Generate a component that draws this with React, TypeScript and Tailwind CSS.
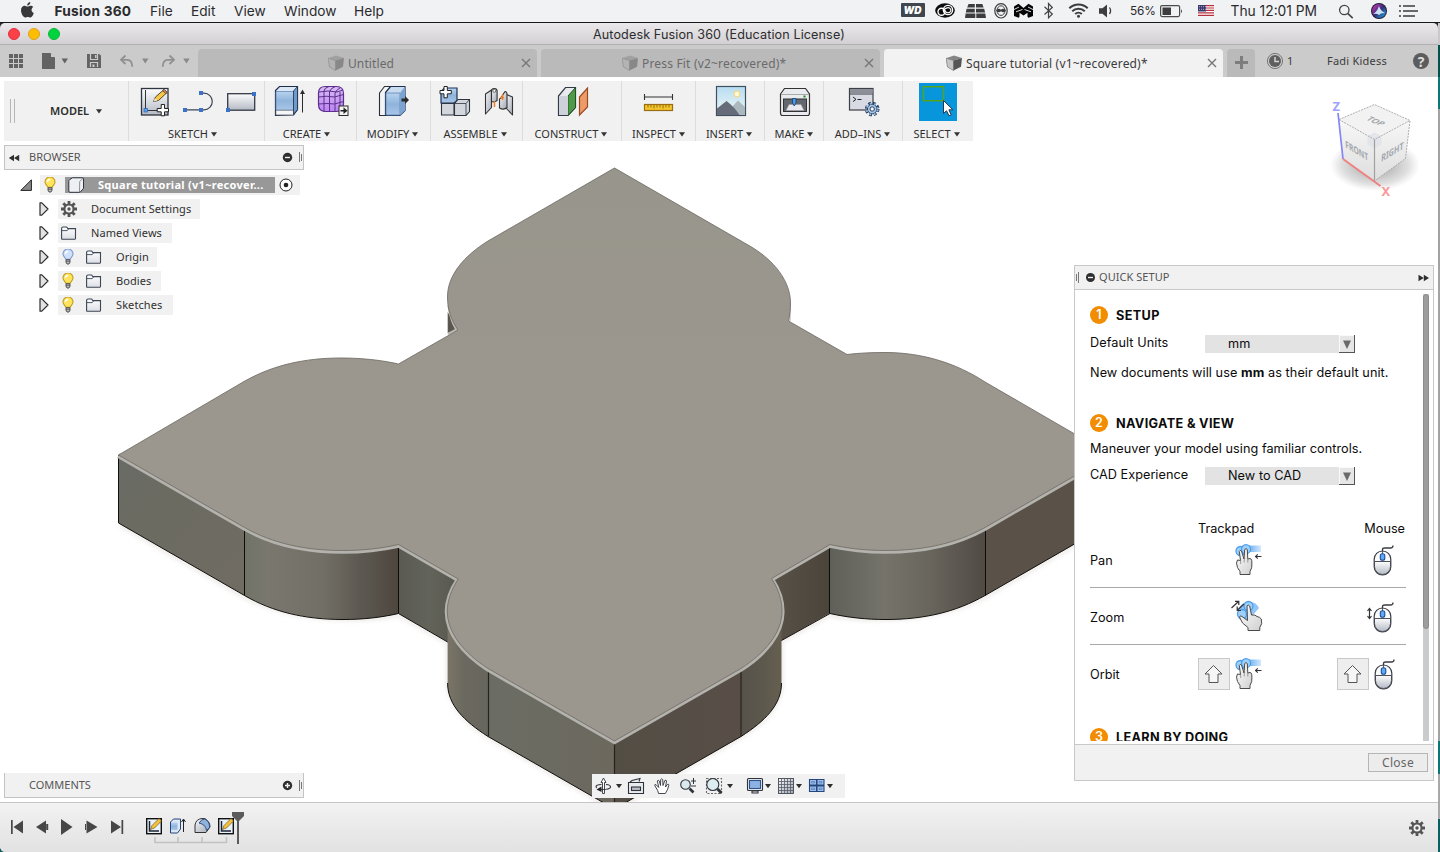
import React from "react";

type ArtProps = { x: number; y: number; w: number; h: number; children: React.ReactNode };

/* An inline drawing whose view box uses window coordinates. */
function Art({ x, y, w, h, children }: ArtProps) {
  return (
    <svg className="block shrink-0" width={w} height={h} viewBox={`${x} ${y} ${w} ${h}`} fill="none">
      {children}
    </svg>
  );
}

function Caret() {
  return (
    <svg className="ml-[3px] block shrink-0" width="6" height="5" viewBox="0 0 6 5">
      <path d="M0 .3h6L3 4.6z" fill="#333" />
    </svg>
  );
}

function Defs() {
  return (
    <svg className="absolute h-0 w-0" aria-hidden="true">
      <defs>
        <linearGradient id="paper" x1="0" y1="0" x2="0" y2="1">
          <stop offset="0" stopColor="#fdfdfe" />
          <stop offset="1" stopColor="#b4b9c4" />
        </linearGradient>
        <linearGradient id="folder" x1="0" y1="0" x2="0" y2="1">
          <stop offset="0" stopColor="#ffffff" />
          <stop offset="1" stopColor="#dcdfe5" />
        </linearGradient>
        <linearGradient id="blue" x1="0" y1="0" x2="0" y2="1">
          <stop offset="0" stopColor="#b8d3ee" />
          <stop offset=".5" stopColor="#8fb4dc" />
          <stop offset="1" stopColor="#a9c5e6" />
        </linearGradient>
        <linearGradient id="steel" x1="0" y1="0" x2="1" y2="1">
          <stop offset="0" stopColor="#f7f8fa" />
          <stop offset="1" stopColor="#a2a8b4" />
        </linearGradient>
        <linearGradient id="purple" x1="0" y1="0" x2="0" y2="1">
          <stop offset="0" stopColor="#d9bdf2" />
          <stop offset="1" stopColor="#bb84f3" />
        </linearGradient>
        <linearGradient id="sky" x1="0" y1="0" x2="0" y2="1">
          <stop offset="0" stopColor="#b6dcf1" />
          <stop offset="1" stopColor="#f3f8f5" />
        </linearGradient>
        <linearGradient id="hand" x1="0" y1="0" x2="1" y2="1">
          <stop offset="0" stopColor="#ffffff" />
          <stop offset="1" stopColor="#cfcfcf" />
        </linearGradient>
        <linearGradient id="swipe" x1="0" y1="0" x2="1" y2="0">
          <stop offset="0" stopColor="#3f97ec" />
          <stop offset="1" stopColor="#d3e8fc" />
        </linearGradient>
        <linearGradient id="siri" x1="0" y1="0" x2="1" y2="1">
          <stop offset="0" stopColor="#e13ab8" />
          <stop offset=".5" stopColor="#3a2d78" />
          <stop offset="1" stopColor="#19b5e8" />
        </linearGradient>
      </defs>
    </svg>
  );
}

const menus: [string, string][] = [
  ["File", "w-[41px]"],
  ["Edit", "w-[43px]"],
  ["View", "w-[50px]"],
  ["Window", "w-[70px]"],
  ["Help", "w-[60px]"],
];

function MenuBar() {
  return (
    <div className="flex h-[23px] shrink-0 items-center border-b border-[#16181c] bg-[#f1f2f4] font-['Inter',sans-serif] text-[13.7px] text-[#2b2b2d]">
      <Art x={0} y={0} w={54.5} h={22}>
        <path d="M30.300 2.100c.2 1.800-1.300 3.500-3.100 3.500-.2-1.700 1.400-3.400 3.100-3.500zM27.600 6.500c.7 0 1.500-.8 3-.8 1 0 2 .5 2.700 1.400-2.500 1.400-2.200 5 .5 6-.6 1.800-1.900 4.500-3.400 4.500-1 0-1.400-.6-2.600-.6s-1.600.6-2.600.6c-1.800 0-4.200-4-4.200-7.300 0-3 1.800-4.600 3.700-4.600 1.300 0 2.100.8 2.900.8z" fill="#38383a" />
      </Art>
      <span className="w-[95.5px] shrink-0 font-bold tracking-[0.22px] whitespace-nowrap">Fusion 360</span>
      {menus.map(([m, w]) => (
        <span key={m} className={`${w} shrink-0`}>{m}</span>
      ))}
      <div className="flex-1" />
      <Art x={896} y={0} w={234} h={22}>
        <rect x="901" y="3" width="24" height="14" rx="1" fill="#3f464d" />
        <text x="903.500" y="13.600" fontSize="10.500" fontWeight="900" fontStyle="italic" fill="#fff" fontFamily="Inter" textLength="18" lengthAdjust="spacingAndGlyphs">WD</text>
        <ellipse cx="945" cy="10.500" rx="9.800" ry="7.200" fill="#0c0c0c" />
        <circle cx="941.500" cy="11.800" r="3.500" stroke="#fff" strokeWidth="1.400" />
        <circle cx="948" cy="10" r="4.600" stroke="#fff" strokeWidth="1.400" />
        <path d="M943 10.500q4-4 6.500-2.500 2.500 2 .5 4-2 1.500-4 0l-3-2.500" stroke="#fff" strokeWidth="1.100" />
        <path d="M968.500 4h6.300v3.600h-7.600zM976 4h6.300l1.300 3.600H976zM966.600 8.800h8.200v3.600h-9zM976 8.800h8.200l.9 3.600H976zM965.600 13.600h9.700V18h-10.300zM976.300 13.600h9l.7 4.400h-9.700z" fill="#3d3d3f" />
        <ellipse cx="1001" cy="10.800" rx="6.200" ry="7.200" stroke="#3d3d3f" strokeWidth="1.200" />
        <ellipse cx="1001" cy="10.600" rx="4" ry="4.800" stroke="#3d3d3f" strokeWidth="1" />
        <path d="M996 10.500c2-2.500 3.500-2 5-.8 1.500-1.200 3-1.700 5 .8-2 2.500-3.500 2-5 .8-1.500 1.200-3 1.700-5-.8z" fill="#3d3d3f" />
        <path d="M1014 6.500 1018.500 3.800 1023.500 8 1028.500 3.800 1033 6.500V16l-4.500 1.800-1-1v-4l-4 2.700-4-2.700v4l-1 1L1014 16z" fill="#050505" />
        <path d="m1014 9.500 5-2.500M1033 9.500l-5-2.500M1016 11.800l6.500-2.300M1031 11.800l-6.500-2.300" stroke="#f1f2f4" strokeWidth=".9" />
        <path d="M1044.500 6.800 1052.300 14 1048.500 17.800V3.500L1052.300 7.500 1044.500 14.500" stroke="#444" strokeWidth="1.200" />
        <path d="M1069.300 8.300a13 13 0 0 1 18.400 0M1072.200 11.300a9 9 0 0 1 12.600 0M1075.200 14.100a4.800 4.800 0 0 1 6.600 0" stroke="#3d3d3f" strokeWidth="2" />
        <circle cx="1078.500" cy="16.300" r="1.500" fill="#3d3d3f" />
        <path d="M1099 8.300h3.500l4.500-3.700v12.800l-4.500-3.700h-3.500z" fill="#3d3d3f" />
        <path d="M1109.500 7.500q2.200 3.200 0 6.500" stroke="#3d3d3f" strokeWidth="1.300" />
      </Art>
      <span className="w-[30px] shrink-0 pt-[2px] text-[11.8px] tracking-[-0.1px]">56%</span>
      <Art x={1160} y={0} w={70.5} h={22}>
        <rect x="1160.600" y="5.600" width="19" height="11" rx="1.500" stroke="#4a4a4c" strokeWidth="1.200" />
        <rect x="1162.500" y="7.500" width="8.500" height="7.500" fill="#3d3d3f" />
        <path d="M1181 9.200q2 2 0 4z" fill="#4a4a4c" />
        <rect x="1198" y="5" width="16" height="11.200" fill="#fff" />
        <path d="M1198 5.600h16M1198 8h16M1198 10.400h16M1198 12.800h16M1198 15.400h16" stroke="#b5303c" strokeWidth="1.200" />
        <rect x="1198" y="5" width="8" height="6.500" fill="#3d3b6e" />
        <path d="M1199 6.700h7M1199 9.300h7" stroke="#c9c8dd" strokeWidth=".8" strokeDasharray="1 1" />
      </Art>
      <span className="w-[104.5px] shrink-0 text-[13.8px] tracking-[0px] whitespace-nowrap">Thu 12:01 PM</span>
      <Art x={1335} y={0} w={105} h={22}>
        <circle cx="1344.300" cy="10" r="4.700" stroke="#444" strokeWidth="1.300" />
        <path d="m1347.700 13.400 5 4.700" stroke="#444" strokeWidth="1.600" />
        <circle cx="1379" cy="11" r="8" fill="#1d1c38" />
        <circle cx="1379" cy="11" r="7" fill="url(#siri)" />
        <path d="M1373 14q4-2 6-8 1.500 5 6 7-4-.5-6 2-2-2-6-1z" fill="#d8f4ff" opacity=".9" />
        <path d="M1399 6h2M1403 6h12M1399 11h2M1403 11h15M1399 16h2M1403 16h12" stroke="#3d3d3f" strokeWidth="1.700" />
      </Art>
    </div>
  );
}

function TitleBar() {
  return (
    <div className="flex h-[22px] shrink-0 items-center rounded-t-[5px] border-b border-[#b1b0b1] bg-linear-to-b from-[#ebe9eb] to-[#d2d0d2]">
      <div className="flex w-[593px] shrink-0 gap-2 pl-2">
        <span className="size-3 rounded-full border border-[#e2303f] bg-[#fc4048]" />
        <span className="size-3 rounded-full border border-[#e0a31e] bg-[#fdbd03]" />
        <span className="size-3 rounded-full border border-[#13b436] bg-[#02d440]" />
      </div>
      <span className="pt-[3px] font-['Inter',sans-serif] text-[12.6px] tracking-[0.11px] whitespace-nowrap text-[#2c2c2e]">Autodesk Fusion 360 (Education License)</span>
    </div>
  );
}

function Box({ on }: { on?: boolean }) {
  return (
    <svg className="mr-1 block shrink-0" width="16" height="16" viewBox="0 0 16 16">
      <path d="M0 3.200 8 .5l8 2.500-8.500 2.500z" fill={on ? "#858585" : "#a0a0a0"} />
      <path d="M0 3.200 7.500 5.500v10L1.500 12z" fill={on ? "#c5c5c5" : "#b3b3b3"} stroke={on ? "#777" : "#8f8f8f"} strokeWidth=".7" />
      <path d="M7.500 5.500 16 3l-1 8.700-7.500 3.800z" fill={on ? "#555" : "#888"} />
    </svg>
  );
}

function Cross() {
  return (
    <svg className="block shrink-0" width="10" height="10" viewBox="0 0 10 10">
      <path d="m1 1 8 8M9 1 1 9" stroke="#777" strokeWidth="1.400" />
    </svg>
  );
}

function Tab({ label, lead, on, track }: { label: string; lead: string; on?: boolean; track: string }) {
  return (
    <div className={`mr-1 flex h-7 w-[339px] shrink-0 items-center rounded-t-[4px] pr-[6px] ${lead} ${on ? "bg-[#f2f2f2] text-[#3b3b3b]" : "bg-[#bababa] text-[#6a6a6a]"}`}>
      <Box on={on} />
      <span className={`flex-1 pt-[2px] text-[12px] whitespace-nowrap ${track}`}>{label}</span>
      <Cross />
    </div>
  );
}

function TabBar() {
  return (
    <div className="flex h-8 shrink-0 items-end bg-[#cbcbcb]">
      <Art x={0} y={45} w={198} h={32}>
        <g fill="#636363">
          {[0, 1, 2].map((r) => [0, 1, 2].map((c) => <rect key={`${r}${c}`} x={9 + c * 5} y={54 + r * 5} width="4" height="4" />))}
          <path d="M42 53h8.500l4.500 4.500V69H42z" />
          <path d="M51 53v4h4z" fill="#cbcbcb" />
          <path d="M61.500 58.500h6.500l-3.250 5z" />
          <path d="M87 54h12l2 1.500V68H87z" />
          <path d="M90.500 54v5.500h7V54M90.500 67v-4.500h7V67" stroke="#cbcbcb" strokeWidth="1.200" fill="none" />
          <path d="M95 55h1.500v3H95zM92.500 64.500h2V67h-2z" fill="#cbcbcb" />
        </g>
        <g stroke="#909090" strokeWidth="1.800">
          <path d="m125.500 55.500-4.500 4.300 4.500 4.200M121.500 59.800h6q4.500 0 4.800 7" />
          <path d="m169.500 55.500 4.500 4.300-4.500 4.200M173.500 59.800h-6q-4.500 0-4.800 7" />
        </g>
        <path d="M142 58.500h6.500l-3.250 5zM183.200 58.500h6.500l-3.250 5z" fill="#8a8a8a" />
      </Art>
      <Tab label="Untitled" lead="pl-[130px]" track="tracking-[0.1px]" />
      <Tab label="Press Fit (v2~recovered)*" lead="pl-[81px]" track="tracking-[0.18px]" />
      <Tab label="Square tutorial (v1~recovered)*" lead="pl-[62px]" on track="tracking-[0.16px]" />
      <Art x={1227} y={45} w={60} h={32}>
        <path d="M1227 77V53q0-4 4-4h20q4 0 4 4v24z" fill="#bababa" />
        <path d="M1235 62.500h13M1241.500 56v13" stroke="#7d7d7d" strokeWidth="3" />
        <circle cx="1275" cy="61" r="7.600" stroke="#777" strokeWidth="1" />
        <circle cx="1275" cy="61" r="6" fill="#5f5f5f" />
        <path d="M1275 57v4.500h4" stroke="#d4d4d4" strokeWidth="1.500" />
      </Art>
      <div className="flex h-8 w-10 items-center text-[11px] text-[#3b3b3b]">1</div>
      <div className="flex h-8 w-[86px] items-center text-[11px] tracking-[0.22px] whitespace-nowrap text-[#3b3b3b]">Fadi Kidess</div>
      <div className="mb-2 flex size-4 items-center justify-center rounded-full bg-[#5c5c5c] text-[14px] font-bold text-[#dcdcdc]">?</div>
    </div>
  );
}

function Pencil({ x, y }: { x: number; y: number }) {
  return (
    <g transform={`translate(${x} ${y})`}>
      <path d="M0 12 2 7.500 10.500 0l3 3L5 11z" fill="#f6c843" stroke="#3a3226" strokeWidth=".9" />
      <path d="m9.200 1.200 1.500-1.300 3 3-1.500 1.400z" fill="#d98b6a" stroke="#3a3226" strokeWidth=".7" />
      <path d="M0 12 1.500 8.500 4 11z" fill="#f4e4c8" />
    </g>
  );
}

const groups: { label: string; x: number; w: number; width: string; nudge?: string; art: React.ReactNode }[] = [
  {
    label: "SKETCH", x: 129, w: 136, width: "w-[136px]", nudge: "pr-[8px]",
    art: (
      <>
        <rect x="141.500" y="88.500" width="26.500" height="26.500" fill="url(#paper)" stroke="#2e3440" strokeWidth="1.300" />
        <path d="M145.500 90v20.500H163" stroke="#333" strokeWidth="1" />
        <rect x="144" y="108.500" width="3.500" height="3.500" fill="#5ba0ea" stroke="#2c62b4" strokeWidth=".7" />
        <Pencil x={153.500} y={89.500} />
        <path d="M161.200 104.500h3.300v4h4v3.300h-4v4h-3.300v-4h-4v-3.300h4z" fill="#fff" stroke="#222" strokeWidth="1" />
        <path d="M185.500 109.800h15.500M201 93.200h3a8.300 8.300 0 0 1 0 16.600h-3" stroke="#3c4656" strokeWidth="1.200" />
        <path d="M183 108h4v4h-4zM199 108h4v4h-4zM199 91h4v4h-4z" fill="#3a72c8" />
        <rect x="227.700" y="93.700" width="27" height="16.500" fill="url(#paper)" stroke="#333a46" strokeWidth="1.300" />
        <path d="M226 108h4v4h-4zM252 92h4v4h-4z" fill="#3a72c8" />
      </>
    ),
  },
  {
    label: "CREATE", x: 265, w: 92, width: "w-[92px]", nudge: "pr-[8px]",
    art: (
      <>
        <path d="m275.500 90.500 4-4h18v23l-4 5.500-18 .5z" fill="#dbe7f4" stroke="#1e2f4c" strokeWidth="1.200" />
        <path d="M276 91.500h17.500V110H276z" fill="url(#blue)" stroke="#6189b9" strokeWidth=".8" />
        <path d="M276 110.500h17.500v4.300H276z" fill="#f4f6f8" stroke="#777" strokeWidth=".6" />
        <path d="m293.500 91 4-4.500v23l-4 5z" fill="#6f9aca" stroke="#1e2f4c" strokeWidth=".8" />
        <path d="M302.500 112.500V92" stroke="#2c2c2c" strokeWidth="1" />
        <path d="m300 94 2.500-4.500L305 94z" fill="#2c2c2c" />
        <path d="M318.500 93q0-6.500 7-6.500h11q7 0 7 7v10q0 8-7 8h-11q-7 0-7-7z" fill="url(#purple)" stroke="#5c2e8f" strokeWidth="1.200" />
        <path d="M318.500 97q8-1.500 16 0l9-2.500M318.500 104q9-1 16 0l9-2.500M324 112V91q0-3 5-4.500M329.500 112V92q1-4 6-5.500M335 112V93q2-4 5-5M319 92q9-2 18 0l6-2M340 110V92" stroke="#5c2e8f" strokeWidth="1" />
        <rect x="339" y="106" width="9" height="9.500" fill="#f4f4f4" stroke="#2b2b2b" strokeWidth="1" />
        <path d="M340.500 110h3v-2.700l4 3.400-4 3.400v-2.600h-3z" fill="#222" />
      </>
    ),
  },
  {
    label: "MODIFY", x: 357, w: 74, width: "w-[74px]", nudge: "pr-[2px]",
    art: (
      <>
        <path d="m379.500 93 5-6.500h6L386 93v22.500h-6.500z" fill="#f2f4f6" stroke="#2b3038" strokeWidth="1.100" />
        <path d="m385.500 92.500 5-6H405v24l-5 5h-14.500z" fill="#c8dbef" stroke="#1e2f4c" strokeWidth="1.200" />
        <path d="M386 93h14v22h-14z" fill="url(#blue)" stroke="#5b83b5" strokeWidth=".8" />
        <path d="m400 93 5-6.500v24l-5 5z" fill="#7ba4d2" />
        <path d="M401.500 98.500h3.500V96l4 4-4 4v-2.500h-3.500z" fill="#2b2b2b" />
      </>
    ),
  },
  {
    label: "ASSEMBLE", x: 431, w: 92, width: "w-[92px]", nudge: "pr-[3px]",
    art: (
      <>
        <path d="M441 91.500 444.500 88H457v12.500L454 103h-13z" fill="url(#blue)" stroke="#1e3357" strokeWidth="1.200" />
        <path d="M441.500 103.500H454V115h-12.500zM454.500 103.500 458 99.500h11.500v12L466 115.500h-11.500z" fill="#d3d6dc" stroke="#2e3440" strokeWidth="1.100" />
        <path d="M466 103.500V115M454.500 103.500H466l3.500-4" stroke="#2e3440" strokeWidth=".8" />
        <path d="M444 86.500h3.300v4h4v3.300h-4v4H444v-4h-4v-3.300h4z" fill="#fff" stroke="#222" strokeWidth="1" />
        <path d="m485.500 94 6-4v17.500l-6 6.500z" fill="url(#steel)" stroke="#333" strokeWidth="1.100" strokeLinejoin="round" />
        <path d="M491.500 91q0-2.500 2.800-2.500t2.800 2.500v9.500q-2.500 2-5.600 1z" fill="url(#steel)" stroke="#333" strokeWidth="1.100" />
        <circle cx="494.300" cy="90.800" r="1.500" fill="#fff" stroke="#333" strokeWidth=".7" />
        <path d="M494.500 101v6" stroke="#f07d22" strokeWidth="1.500" />
        <path d="M506.500 94.500v14l6 6.500V97z" fill="url(#steel)" stroke="#333" strokeWidth="1.100" strokeLinejoin="round" />
        <path d="M505 91.500q2 0 2 3v13q-3 3-7.500.5v-9q2.500-1 3.500-4.500z" fill="url(#steel)" stroke="#333" strokeWidth="1.100" />
        <path d="M502.500 94v6M500 97.500h4" stroke="#f07d22" strokeWidth="1.400" />
      </>
    ),
  },
  {
    label: "CONSTRUCT", x: 523, w: 99, width: "w-[99px]", nudge: "pr-[2px]",
    art: (
      <>
        <path d="m558.500 96 7-8.500h10v20L568 115.500h-9.500z" fill="#e7eaee" stroke="#333a46" strokeWidth="1.200" />
        <path d="m568 96 7.500-8.500v20L568 115.500z" fill="#4d9a49" stroke="#234f25" strokeWidth="1" />
        <path d="M559 96h9v19h-9z" fill="#cdd2da" />
        <path d="m579.500 97 8-9v19l-8 8z" fill="#ee9b69" stroke="#9a4a1f" strokeWidth="1.200" />
      </>
    ),
  },
  {
    label: "INSPECT", x: 622, w: 74, width: "w-[74px]",
    art: (
      <>
        <path d="M644 97h29M644.500 94v6M672.500 94v6" stroke="#333" strokeWidth="1.100" />
        <rect x="644.500" y="104.500" width="28" height="6" fill="#f3c62c" stroke="#9c6c12" strokeWidth="1.200" />
        <path d="M648 105v2.500M651 105v2.500M654 105v3.500M657 105v2.500M660 105v2.500M663 105v3.500M666 105v2.500M669 105v2.500" stroke="#7d5a0c" strokeWidth=".8" />
      </>
    ),
  },
  {
    label: "INSERT", x: 696, w: 69, width: "w-[69px]", nudge: "pr-[2px]",
    art: (
      <>
        <rect x="716.500" y="86.500" width="29" height="29" fill="url(#sky)" stroke="#3f5060" strokeWidth="1.200" />
        <circle cx="737" cy="94" r="2.800" fill="#fffbe0" stroke="#f7d98a" strokeWidth="1.200" />
        <path d="m730 109 8-8.500 7 6.500v8h-15z" fill="#abb9be" />
        <path d="M717 108.500 726.500 101q8 6 13 14H717z" fill="#666b7a" />
      </>
    ),
  },
  {
    label: "MAKE", x: 765, w: 59, width: "w-[59px]",
    art: (
      <>
        <path d="m780.500 94 4-5.500h21l4 5.500v19q0 2.500-2 2.500h-25q-2 0-2-2.500z" fill="#e9ebee" stroke="#333" strokeWidth="1.200" />
        <path d="M781 94.500h28" stroke="#aaa" />
        <rect x="783.500" y="99" width="23" height="12.500" fill="#63676e" stroke="#333" />
        <path d="m786 110.500 3-6h12l3 6z" fill="#e8eaf0" stroke="#999" strokeWidth=".6" />
        <path d="M792.500 98.500h3.500v4.500l-1.750 3-1.750-3z" fill="#4a9be8" stroke="#173e6f" strokeWidth=".8" />
        <rect x="803.500" y="95.500" width="2" height="2" fill="#178a1c" />
      </>
    ),
  },
  {
    label: "ADD–INS", x: 824, w: 79, width: "w-[79px]", nudge: "pr-[1px]",
    art: (
      <>
        <rect x="849.500" y="88.500" width="23.500" height="21.500" fill="#d8dbe3" stroke="#3c3f48" strokeWidth="1.200" />
        <path d="M850 91h22.500" stroke="#8d9098" strokeWidth="4" />
        <path d="M850 94h22.500" stroke="#3c3f48" />
        <path d="m853 97 3 2.300-3 2.300M857.500 99.500h4" stroke="#222" strokeWidth="1" />
        <circle cx="872.200" cy="109" r="5.800" stroke="#27405f" strokeWidth="3" strokeDasharray="2.700 1.860" />
        <circle cx="872.200" cy="109" r="4.800" fill="#a7c4ea" stroke="#27405f" strokeWidth="1" />
        <circle cx="872.200" cy="109" r="5.600" stroke="#9dbbe2" strokeWidth="1.800" strokeDasharray="1.700 2.860" strokeDashoffset="-.5" />
        <circle cx="872.200" cy="109" r="2.200" fill="#f5f5f5" stroke="#27405f" strokeWidth="1" />
      </>
    ),
  },
  {
    label: "SELECT", x: 903, w: 70, width: "w-[70px]", nudge: "pr-[2px]",
    art: (
      <>
        <rect x="919" y="83" width="38" height="38" fill="#0796db" />
        <rect x="923.500" y="86.700" width="20" height="14" stroke="#5aa50e" strokeWidth="1.400" />
        <path d="M943.500 100.500v13l3-2.700 2.500 5 2.200-1-2.300-5h4z" fill="#fff" stroke="#26374a" strokeWidth="1" />
      </>
    ),
  },
];

function Toolbar() {
  return (
    <div className="flex h-[60px] w-[969px] bg-[#f1f1f1] text-[11px] text-[#2e2e2e]">
      <div className="flex w-[124px] items-center">
        <div className="ml-[6px] h-6 w-[5px] border-x border-[#b5b5b5]" />
        <span className="ml-[35px] pt-px font-semibold">MODEL</span>
        <span className="ml-1"><Caret /></span>
      </div>
      {groups.map((g) => (
        <div key={g.label} className={`flex flex-col border-l border-[#dcdcdc] ${g.width}`}>
          <Art x={g.x} y={81} w={g.w - 1} h={45}>{g.art}</Art>
          <div className={`flex h-4 items-center justify-center whitespace-nowrap ${g.nudge ?? ""}`}>
            {g.label}
            <Caret />
          </div>
        </div>
      ))}
    </div>
  );
}

const wall = "#11100c";

function Model() {
  const face =
    "M118.500 455 244.500 527.500C273 543.500 305 550.500 343 550.500 363 550.500 381 548.500 398.500 544.500L458.300 579C451 590 447.300 601 447.300 611 447.300 633 464 653 488 668.500L614.500 741 741 668.500C765 653 782 633 782 611 782 601 779 590 771.500 578.500L830 544.500C848 548.500 866 550.500 886 550.500 924 550.500 956 543.500 985 527.500L1111 455";
  const back =
    "L985 382C956 363 922 352.500 885 352.500 872 352.500 859 353 847 354.500L788.500 321C790 314 790.500 309 790.500 303 790.500 282 775 260 748 245L614.500 168 488 241C464 256 447.500 275 447.500 297 447.500 309 451 320 458 330L398.500 364C381 360 361 358 341 358 305 358 273 365 244 381.500Z";
  return (
    <svg className="absolute top-0 left-0 block" width="1438" height="725" viewBox="0 77 1438 725" fill="none">
      <defs>
        <linearGradient id="w1" x1="0" y1="0" x2="1" y2="1"><stop offset="0" stopColor="#686b65" /><stop offset=".4" stopColor="#6c6b61" /><stop offset="1" stopColor="#706c63" /></linearGradient>
        <linearGradient id="w2"><stop offset="0" stopColor="#707268" /><stop offset=".15" stopColor="#7a786e" /><stop offset=".5" stopColor="#727066" /><stop offset=".75" stopColor="#5d5952" /><stop offset="1" stopColor="#4d463d" /></linearGradient>
        <linearGradient id="w3"><stop offset="0" stopColor="#5a5a53" /><stop offset=".5" stopColor="#626359" /><stop offset="1" stopColor="#57574f" /></linearGradient>
        <linearGradient id="w4"><stop offset="0" stopColor="#7b7567" /><stop offset=".4" stopColor="#6b695f" /><stop offset="1" stopColor="#67665e" /></linearGradient>
        <linearGradient id="w5"><stop offset="0" stopColor="#6b6d64" /><stop offset="1" stopColor="#6c685e" /></linearGradient>
        <linearGradient id="w6"><stop offset="0" stopColor="#534e45" /><stop offset="1" stopColor="#584e47" /></linearGradient>
        <linearGradient id="w7"><stop offset="0" stopColor="#56514a" /><stop offset="1" stopColor="#645f50" /></linearGradient>
        <linearGradient id="w8"><stop offset="0" stopColor="#595249" /><stop offset="1" stopColor="#4b443b" /></linearGradient>
        <linearGradient id="w9"><stop offset="0" stopColor="#5f6059" /><stop offset=".35" stopColor="#75736a" /><stop offset=".65" stopColor="#68655d" /><stop offset="1" stopColor="#504a43" /></linearGradient>
        <linearGradient id="top" x1="0" y1="168" x2="0" y2="742" gradientUnits="userSpaceOnUse"><stop offset="0" stopColor="#98968c" /><stop offset=".4" stopColor="#9b968e" /><stop offset="1" stopColor="#9c978e" /></linearGradient>
        <filter id="soft" x="-5%" y="-5%" width="110%" height="110%"><feGaussianBlur stdDeviation="2" /></filter>
      </defs>
      <path d="M120 525 244.500 597C290 621 360 623 398.500 615L448 643V684C450 705 464 722 488 737L614.500 810 741 737C765 722 780 707 781.500 684V641L830 615C870 623 940 621 985 597L1085 539" stroke="#9a8f80" strokeOpacity=".25" strokeWidth="3" filter="url(#soft)" />
      <g>
        <path d="M118.500 455 244.500 527.500V595.500L118.500 523z" fill="url(#w1)" />
        <path d="M244.500 527C273 543.500 305 550.500 343 550.500 363 550.500 381 548.500 398.500 544.500V613.500C381 617.500 363 619.500 343 619.500 305 619.500 273 612 244.500 595.500z" fill="url(#w2)" />
        <path d="M398.500 544.500 460 579V649L398.500 613.500z" fill="url(#w3)" />
        <path d="M770 579 830 544.500V613L770 647z" fill="url(#w8)" />
        <path d="M830 544.500C848 548.500 866 550.500 886 550.500 924 550.500 956 543.500 985 527.500V595.500C956 612 924 619.500 886 619.500 866 619.500 848 617.500 830 613.500z" fill="url(#w9)" />
        <path d="M985 527.500 1111 455V523L985 595.500z" fill="#5a5148" />
        <path d="M447.600 612C450 640 466 655 488 668V736.500C464 721 447.600 705 447.600 683z" fill="url(#w4)" />
        <path d="M488 668 614.500 741V809L488 736.500z" fill="url(#w5)" />
        <path d="M614.500 741 741 668V736.500L614.500 809z" fill="url(#w6)" />
        <path d="M741 668C765 653 780 635 781.500 612V683C781.500 705 765 721 741 736.500z" fill="url(#w7)" />
      </g>
      <path d="M118.500 455V523L244.500 595.500C273 612 305 619.500 343 619.500 363 619.500 381 617.500 398.500 613.500L447.600 642M447.600 683C447.600 705 464 721 488 736.500L614.500 809 741 736.500C765 721 781.500 705 781.500 683M781.500 640.500 830 613.500C848 617.500 866 619.500 886 619.500 924 619.500 956 612 985 595.500L1111 523" stroke={wall} strokeWidth="1" />
      <path d="M244.500 528V595.500M398.500 546V613.500M829.500 546V613.500M985.500 528V595.500" stroke="#0d0c09" strokeWidth="1" />
      <path d="M488.500 670V736.500M614.500 742V809M741 670V736.500" stroke="#26231d" strokeWidth="1.200" />
      <path d="M447.700 312V333L458 330z" fill="#5a564e" />
      <path d="M448.500 305Q451 321 456.500 329.500L448 334" stroke="#b9b8b4" strokeWidth="2.500" />
      <path d="M790 305V321" stroke="#c4c3bf" strokeWidth="1.500" />
      <path d={face} transform="translate(0 .6)" stroke="#b3b2ad" strokeWidth="5.200" />
      <path d={face + back} fill="url(#top)" stroke="#74716a" strokeWidth=".9" />
    </svg>
  );
}

function ViewCube() {
  return (
    <Art x={1325} y={90} w={100} h={115}>
      <defs>
        <radialGradient id="shade"><stop offset=".2" stopColor="#888" stopOpacity=".7" /><stop offset=".75" stopColor="#999" stopOpacity=".3" /><stop offset="1" stopColor="#aaa" stopOpacity="0" /></radialGradient>
        <linearGradient id="cf" x1="0" y1="0" x2="0" y2="1"><stop offset="0" stopColor="#f7f7f7" /><stop offset="1" stopColor="#dedede" /></linearGradient>
      </defs>
      <ellipse cx="1375" cy="165" rx="45" ry="26" fill="url(#shade)" />
      <path d="m1339 119.500 35.500-15 35.500 16-35.500 19z" fill="#f2f2f2" />
      <path d="m1339 119.500 35.500 20V181L1343 159z" fill="url(#cf)" />
      <path d="m1410 120.500-35.500 19V181l31-22.500z" fill="url(#cf)" />
      <path d="m1367.500 136 7-3.500 7 3.500v8.500l-7 4-7-4z" fill="#dde1e6" opacity=".8" />
      <path d="m1339 119.500 35.500-15 35.500 16-4.500 38-31 22.500M1339 119.500l35.500 20 35.500-19" stroke="#a5a5a5" strokeWidth=".9" strokeDasharray="2 1" />
      <path d="M1374.500 139.500V181" stroke="#a0a0a0" strokeWidth="1.200" />
      <path d="m1338 113 5 46" stroke="#8585f5" strokeWidth="1.700" />
      <path d="m1343 159 37.500 27" stroke="#f08080" strokeWidth="1.900" />
      <g fontFamily="Noto Sans" fontWeight="700" fill="#a3a7ad">
        <text transform="matrix(.78 .34 -.75 .46 1365.500 119.500)" fontSize="10">TOP</text>
        <text transform="matrix(.68 .4 .08 1 1345.500 147.500)" fontSize="10">FRONT</text>
        <text transform="matrix(.72 -.43 -.06 1 1381 162)" fontSize="10">RIGHT</text>
        <text x="1332.500" y="110.500" fontSize="13" fill="#a2a2fa">Z</text>
        <text x="1381.500" y="195.500" fontSize="13" fill="#fa9a9a">X</text>
      </g>
    </Art>
  );
}

function Bulb({ off }: { off?: boolean }) {
  return (
    <svg className="block shrink-0" width="12" height="16" viewBox="0 0 12 16">
      <path d="M3.800 10.200C3.500 8.500 1 7.800 1 5a5 5 0 0 1 10 0c0 2.800-2.500 3.500-2.800 5.200z" fill={off ? "#cfe0fb" : "#ffe45c"} stroke={off ? "#7f9ad0" : "#c39a20"} strokeWidth="1.100" />
      <path d="M3.500 5a2.500 2.500 0 0 1 2.500-2.500" stroke="#fff" strokeWidth="1.400" fill="none" />
      <path d="M4 10.700h4v2.500L7 15H5l-1-1.800z" fill="#bbb" stroke="#444" strokeWidth=".9" />
      <path d="M4 12.300h4" stroke="#444" strokeWidth=".7" />
    </svg>
  );
}

function Folder() {
  return (
    <svg className="block shrink-0" width="16" height="14" viewBox="0 0 16 14">
      <path d="M.6 2.500q0-1.500 1.500-1.500h3.500l1.300 1.600h7.600v10q0 .6-.6.600H1.200q-.6 0-.6-.6z" fill="url(#folder)" stroke="#3c4656" strokeWidth="1.100" />
      <path d="M1 4.600h5.200l1.400-1.700" stroke="#3c4656" strokeWidth=".9" fill="none" />
    </svg>
  );
}

function Gear({ size, fill }: { size: number; fill: string }) {
  return (
    <svg className="block shrink-0" width={size} height={size} viewBox="0 0 16 16" fill="none">
      <g stroke={fill}>
        <path d="M8 0v16M0 8h16M2.300 2.300l11.400 11.400M13.700 2.300 2.300 13.700" strokeWidth="2.800" />
      </g>
      <circle cx="8" cy="8" r="5.600" fill={fill} />
      <circle cx="8" cy="8" r="3.500" fill="#f1f1f1" />
      <circle cx="8" cy="8" r="1.700" fill={fill} />
    </svg>
  );
}

function Expander() {
  return (
    <svg className="block shrink-0" width="10" height="14" viewBox="0 0 10 14">
      <path d="M1 .8h1.800L9 7l-6.200 6.200H1z" fill="#e2e2e2" stroke="#2e2e2e" strokeWidth="1.200" strokeLinejoin="round" />
    </svg>
  );
}

const rows = [
  { label: "Document Settings", width: "w-[142px]", kind: "gear" },
  { label: "Named Views", width: "w-[114px]", kind: "folder" },
  { label: "Origin", width: "w-[99px]", kind: "off" },
  { label: "Bodies", width: "w-[103px]", kind: "on" },
  { label: "Sketches", width: "w-[115px]", kind: "on" },
];

function Browser() {
  return (
    <div className="mt-1 flex w-[300px] flex-col text-[11px] text-[#2f2f2f]">
      <div className="flex h-[25px] items-center border border-[#c4c4c4] bg-[#f1f1f1] text-[#555]">
        <Art x={5} y={146} w={24} h={23}>
          <path d="m8.800 158 5.200-3.300v6.600zM14 158l5.200-3.300v6.600z" fill="#2e2e2e" />
        </Art>
        <span className="flex-1">BROWSER</span>
        <Art x={282} y={146} w={21} h={23}>
          <circle cx="287.500" cy="157.500" r="4.700" fill="#2e2e2e" />
          <path d="M285 157.500h5" stroke="#f1f1f1" strokeWidth="1.400" />
          <path d="M299.500 152v10M301.500 154v7" stroke="#777" strokeWidth="1" />
        </Art>
      </div>
      <div className="mt-[5px] flex h-5 items-center pl-4">
        <svg className="mr-2 block" width="12" height="12" viewBox="0 0 12 12"><path d="M11.400.8v10.600H.8z" fill="#8a8a8a" stroke="#222" /></svg>
        <div className="flex h-5 w-[260px] items-center bg-[#f1f1f1] pl-1">
          <Bulb />
          <div className="ml-[9px] flex h-4 w-[210px] items-center bg-[#989898] pl-[3px] font-bold text-white">
            <svg className="mr-[14px] block" width="16" height="16" viewBox="0 0 16 16">
              <path d="M.8 4.500q0-1.500 1-2L4.500.8h10q1 0 1 1v9.500l-3 3.500q-.5.500-1.300.5H2q-1.200 0-1.200-1.200z" fill="#eef0f3" stroke="#2e3440" strokeWidth="1" />
              <path d="m11.500 15 .2-10.500L15.500.8" stroke="#777" strokeWidth=".8" fill="none" />
            </svg>
            <span className="tracking-[0.29px] whitespace-nowrap">Square tutorial (v1~recover...</span>
          </div>
          <svg className="ml-[3.500px] block" width="14" height="14" viewBox="0 0 14 14"><circle cx="7" cy="7" r="6" fill="#fff" stroke="#222" /><circle cx="7" cy="7" r="2.300" fill="#222" /></svg>
        </div>
      </div>
      {rows.map((r) => (
        <div key={r.label} className="mt-1 flex h-5 items-center pl-[35px]">
          <Expander />
          <div className={`ml-[9px] flex h-5 items-center bg-[#f1f1f1] whitespace-nowrap ${r.width}`}>
            {r.kind === "gear" && <div className="w-[33px] pl-[3px]"><Gear size={16} fill="#555" /></div>}
            {r.kind === "folder" && <div className="w-[33px] pl-[3px]"><Folder /></div>}
            {(r.kind === "on" || r.kind === "off") && (
              <div className="flex w-[58px] items-center pl-1">
                <Bulb off={r.kind === "off"} />
                <div className="ml-3"><Folder /></div>
              </div>
            )}
            <span className="tracking-[0.09px]">{r.label}</span>
          </div>
        </div>
      ))}
    </div>
  );
}

function Comments() {
  return (
    <div className="absolute top-[696px] left-1 flex h-[25px] w-[300px] items-center border border-t-0 border-[#c4c4c4] bg-[#f1f1f1] pl-6 text-[11px] text-[#555]">
      <span className="flex-1">COMMENTS</span>
      <Art x={282} y={774} w={21} h={23}>
        <circle cx="287.500" cy="785.500" r="4.700" fill="#2e2e2e" />
        <path d="M285 785.500h5M287.500 783v5" stroke="#f1f1f1" strokeWidth="1.400" />
        <path d="M299.500 780v11M301.500 782v7" stroke="#777" strokeWidth="1" />
      </Art>
    </div>
  );
}

function NavBar() {
  return (
    <div className="absolute top-[697px] left-[592px] bg-[#f1f1f1]">
      <Art x={592} y={774} w={253} h={24}>
        <g stroke="#2f343c" strokeWidth="1.100">
          <path d="M602.500 793.500v-11h-1.500l2.500-4.500 2.500 4.500h-1.500v11z" fill="#fff" strokeWidth=".9" />
          <path d="M601.500 784.500q-5.500.3-5.500 2 0 .8 1 1.300M606 784.500q4.500.4 4.500 2.300 0 2-4.500 2.500l-5 .2" />
          <path d="m601.500 786.500-5 3 5 2.500z" fill="#222" stroke="none" />
          <path d="m630 782 2-1.500 8-2-1 3M628.500 782.500h15v11h-15z" fill="#e9ebee" />
          <rect x="631.500" y="787" width="9" height="3.500" fill="#b8bcc5" />
          <path d="M658.500 793.500q0-2.500-3.500-7.500-.8-1.800.8-1.500l3 3-1.500-6.500q.8-1.800 2 0l1.200 4.500.2-6q1-1.500 2 0l.3 6 1.800-5q1.300-1 1.700.5l-1 6 1.800-2.500q1.800-.8 1.500.8-.8 4.500-3.500 8.200z" fill="#fff" strokeWidth=".9" />
          <circle cx="685.500" cy="784.500" r="4.800" fill="#dbe9ee" />
          <path d="m689.500 788.500 4 4" strokeWidth="2.600" />
          <path d="M693.500 778v6M691 781h5M691 786h5" strokeWidth="1" />
          <rect x="706.500" y="778.500" width="15" height="15" strokeDasharray="2 1.500" stroke="#666" />
          <circle cx="712.800" cy="784.500" r="6" fill="#dcecef" />
          <path d="m717.500 789 4 4" strokeWidth="3" />
          <rect x="747.500" y="778.500" width="15" height="12" rx="1" fill="#e9ebee" />
          <rect x="749.500" y="780.500" width="11" height="8" fill="#8db2e3" stroke="#2e528c" />
          <path d="M752 791v2h6v-2z" fill="#ddd" />
          <rect x="778.500" y="778.500" width="15" height="15" fill="url(#steel)" strokeWidth=".8" />
          <path d="M781.500 779v14M784.500 779v14M787.500 779v14M790.500 779v14M779 781.500h14M779 784.500h14M779 787.500h14M779 790.500h14" strokeWidth=".8" stroke="#555a66" />
          <path d="M809.500 779.500h7v5.500h-7zM817 779.500h7v5.500h-7zM809.500 786h7v5.500h-7zM817 786h7v5.500h-7z" fill="#9fc1ec" stroke="#26457c" />
          <path d="M811.500 781.500h3v1.500h-3zM819 781.500h3v1.500h-3zM811.500 788h3v1.500h-3zM819 788h3v1.500h-3z" stroke="#4d78b8" strokeWidth=".7" />
        </g>
        <path d="M616 784h6l-3 4.200zM727 784h6l-3 4.200zM765 784h6l-3 4.200zM796 784h6l-3 4.200zM827 784h6l-3 4.200z" fill="#2e2e2e" />
      </Art>
    </div>
  );
}

function SwipeHand({ y }: { y: number }) {
  return (
    <g transform={`translate(1235 ${y})`}>
      <path d="M8 .5h18v6.500H8z" fill="url(#swipe)" />
      <circle cx="5.500" cy="6" r="4.500" fill="#9fd0fa" stroke="#4c9eec" strokeWidth="1.300" />
      <circle cx="11" cy="4.200" r="4.500" fill="#9fd0fa" stroke="#4c9eec" strokeWidth="1.300" />
      <path d="M5 29.500v-3L2.500 22.500q-2-5 0-7.500l3 .5L4.300 6.500q.7-2 2.200-.5L9 14 9.700 4.500q1.300-1.800 2.600 0l.5 9.500 2.200-.5q1.500.3 1.700 1.800l.2 2.700q.5 5-1.900 8.500v3z" fill="url(#hand)" stroke="#4a4a4a" strokeWidth="1" strokeLinejoin="round" />
      <path d="M5.700 15.500v3.500M9.200 13.500v4M12.800 14v3.500" stroke="#777" strokeWidth=".7" />
      <path d="M26.500 11.500h-6m2.300-2.200-2.300 2.200 2.300 2.200" stroke="#333" strokeWidth="1.100" />
    </g>
  );
}

function MouseArt({ x, y }: { x: number; y: number }) {
  return (
    <g transform={`translate(${x} ${y})`} stroke="#3a3d44">
      <path d="M9 6V4.500Q9 3 11 3h6q2.500 0 2.500-2.500" strokeWidth="1.300" />
      <rect x=".7" y="6" width="16.600" height="24" rx="8.300" fill="#fbfbfc" strokeWidth="1.200" />
      <path d="M1 16.500h16V21.500a8 8 0 0 1-16 0z" fill="url(#paper)" strokeWidth=".9" />
      <path d="M9 6v4" strokeWidth=".8" />
      <rect x="6.800" y="8.800" width="4.500" height="6.500" rx="2" fill="#62a9f5" stroke="#1d4f9b" strokeWidth="1.100" />
    </g>
  );
}

function Shift({ x }: { x: number }) {
  return (
    <g transform={`translate(${x} 658)`}>
      <rect x=".5" y=".5" width="31" height="31" fill="#eee" stroke="#c9c9c9" />
      <path d="m15.500 7.500 8.500 8.500h-4v8.500h-9V16H7z" fill="#f6f6f6" stroke="#555" strokeWidth="1" />
    </g>
  );
}

function Step({ n, title }: { n: number; title: string }) {
  return (
    <>
      <span className="flex size-[18px] shrink-0 items-center justify-center rounded-full bg-[#f28c00] text-[12.5px] font-semibold text-white">{n}</span>
      <span className="ml-2 pt-[2px] text-[12.7px] font-bold tracking-[0.34px] whitespace-nowrap">{title}</span>
    </>
  );
}

function Select({ value }: { value: string }) {
  return (
    <div className="mt-px flex h-[18px] w-[150px] items-center bg-[#e3e3e3] pl-[23px]">
      <span className="flex-1 pt-px tracking-[0.05px] whitespace-nowrap">{value}</span>
      <div className="flex h-[18px] w-[16px] items-center justify-center border-r border-b border-[#555] bg-[#e6e6e6] shadow-[inset_1px_1px_0_#fafafa]">
        <svg className="mt-[2px] block" width="8" height="9" viewBox="0 0 8 9"><path d="M0 .5h8L4 9z" fill="#6a6a6a" /></svg>
      </div>
    </div>
  );
}

function QuickSetup() {
  return (
    <div className="absolute top-[188px] left-[1074px] flex h-[516px] w-[360px] flex-col border border-[#c8c8c8] bg-white">
      <div className="flex h-[24px] shrink-0 items-center border-b border-[#c8c8c8] bg-[#f1f1f1] text-[11px] text-[#555]">
        <Art x={1075} y={266} w={24} h={23}>
          <path d="M1076.500 274v7M1078.500 272v11" stroke="#777" />
          <circle cx="1090.500" cy="277.500" r="4.500" fill="#2e2e2e" />
          <path d="M1088 277.500h5" stroke="#f1f1f1" strokeWidth="1.400" />
        </Art>
        <span className="flex-1 tracking-[0.05px]">QUICK SETUP</span>
        <Art x={1415} y={266} w={18} h={23}>
          <path d="M1418.500 274.700v6.600l5.200-3.300zM1423.800 274.700v6.600l5.200-3.300z" fill="#2e2e2e" />
        </Art>
      </div>
      <div className="flex h-[451px] shrink-0 overflow-hidden">
        <div className="flex w-[348px] shrink-0 flex-col pl-[15px] font-['Inter',sans-serif] text-[12.7px] text-[#0c0c0c]">
          <div className="mt-[15px] flex h-5 shrink-0 items-center"><Step n={1} title="SETUP" /></div>
          <div className="mt-2 flex h-5 shrink-0 items-center"><span className="w-[115px] tracking-[0.07px]">Default Units</span><Select value="mm" /></div>
          <div className="mt-[10px] flex h-5 shrink-0 items-center tracking-[0.07px] whitespace-pre">New documents will use <b>mm</b> as their default unit.</div>
          <div className="mt-[30px] flex h-5 shrink-0 items-center"><Step n={2} title="NAVIGATE & VIEW" /></div>
          <div className="mt-[6px] flex h-5 shrink-0 items-center tracking-[0.05px] whitespace-nowrap">Maneuver your model using familiar controls.</div>
          <div className="mt-[6px] flex h-5 shrink-0 items-center"><span className="w-[115px] tracking-[0.02px] whitespace-nowrap">CAD Experience</span><Select value="New to CAD" /></div>
          <div className="mt-[34px] flex h-5 w-[315px] shrink-0 items-center justify-between pl-[108px]"><span>Trackpad</span><span>Mouse</span></div>
          <div className="flex h-[49px] w-[316px] shrink-0 items-center border-b border-[#a8a8a8]">
            <span className="w-[108px] pb-1">Pan</span>
            <Art x={1198} y={540} w={208} h={47}><SwipeHand y={545} /><MouseArt x={1373.500} y={545} /></Art>
          </div>
          <div className="flex h-[57px] w-[316px] shrink-0 items-center border-b border-[#a8a8a8]">
            <span className="w-[108px] pt-1">Zoom</span>
            <Art x={1198} y={588} w={208} h={56}>
              <path d="M1238 612q1-9 10-10 8-1 11 6l-12 14-8-3z" fill="#75b6f4" opacity=".8" />
              <circle cx="1248.500" cy="606" r="4.500" fill="#9fd0fa" stroke="#4c9eec" strokeWidth="1.300" />
              <circle cx="1242" cy="614" r="4.500" fill="#9fd0fa" stroke="#4c9eec" strokeWidth="1.300" />
              <path d="M1248 630.500v-3l-5.500-4.500-3-6q.5-2 2.500-.5l5.500 4-.5-14.500q1.200-2 2.700 0l1.800 9q4-.5 5.500 1.500 3 .5 4.300 2.500 1.500 5-1.500 8.500v3z" fill="url(#hand)" stroke="#4a4a4a" strokeLinejoin="round" />
              <path d="m1231.500 608 7-6.500m-3.500-.2h3.800v3.700M1244 604l-7 6.500m.2-3.900v3.900h3.800" stroke="#333" strokeWidth="1.200" />
              <MouseArt x={1373.500} y={602} />
              <path d="M1369.500 608.500v10m-2-7.500 2-2.500 2 2.500m-4 5 2 2.500 2-2.500" stroke="#333" strokeWidth="1.200" />
            </Art>
          </div>
          <div className="flex h-[57px] w-[316px] shrink-0 items-center">
            <span className="w-[108px] pt-[2px]">Orbit</span>
            <Art x={1198} y={645} w={208} h={57}><Shift x={1198} /><SwipeHand y={659} /><Shift x={1337} /><MouseArt x={1374.500} y={659} /></Art>
          </div>
          <div className="mt-[25px] flex h-5 shrink-0 items-center"><Step n={3} title="LEARN BY DOING" /></div>
        </div>
        <div className="mt-1 h-[447px] w-[6px] bg-[#cacbcc]">
          <div className="h-[335px] rounded-full border border-[#8c8c8c] bg-[#9d9d9d]" />
        </div>
      </div>
      <div className="mt-[3px] flex flex-1 items-center justify-end border-t border-[#c8c8c8] bg-[#f1f1f1] pr-[5px]">
        <div className="flex h-[19px] w-[60px] items-center justify-center border border-[#b5b5b5] bg-[#ececec] text-[12px] tracking-[0.3px] text-[#666]">Close</div>
      </div>
    </div>
  );
}

function Timeline() {
  return (
    <div className="flex h-[50px] shrink-0 items-center justify-between border-t border-[#c6c6c6] bg-linear-to-b from-[#f2f2f2] to-[#e2e2e2] pr-[13px]">
      <Art x={0} y={803} w={260} h={49}>
        <path d="M0 848q1 3 4 4H0z" fill="#0c5a58" />
        <g fill="#474747">
          <path d="M11 820h1.700v14H11zM23 820.500v13l-9.500-6.500zM46 820.500v13l-10-6.500zM61 819v16l11.500-8zM86.500 820.500v13l11-6.500zM111 820.500v13l10-6.500zM121.500 820h1.700v14h-1.700zM46.200 824h2v6h-2zM85 824h2v6h-2z" />
        </g>
        <path d="M155 837v5.500h71.500V837M178 837v5M202 837v5" stroke="#c2c2c2" strokeWidth="1.600" />
        {[146, 218].map((x) => (
          <g key={x}>
            <rect x={x + 0.7} y="818.700" width="14.600" height="15" fill="#e8f3fc" stroke="#111" strokeWidth="1.400" />
            <path d={`M${x + 3.500} 821v10H${x + 13}`} stroke="#1c2433" strokeWidth="1.500" />
            <path d={`m${x + 4.500} 829.500 1.500-4 7-7 2.500 2.500-7 7z`} fill="#f5c13a" stroke="#5a4313" strokeWidth=".6" />
          </g>
        ))}
        <path d="m170.500 822 3-3h7v10l-3 4h-7z" fill="#dce7f4" stroke="#26457c" strokeWidth="1" />
        <path d="M171 822.500h6.500v7.500H171z" fill="url(#blue)" />
        <path d="M183.500 832v-12m-2 2 2-3 2 3" stroke="#222" />
        <path d="M195 832.500V825q1-6 7-6.500l3 .2q5 3 5 8.300l-4 5.500z" fill="url(#steel)" stroke="#333" />
        <path d="M199 823q3-4.500 6-4 5 3 4.500 8.500l-3 3q-.5-6-7.500-7.500z" fill="#8fb4dc" stroke="#26457c" strokeWidth=".9" />
        <path d="M232 812h12v4l-5 5v23h-2v-23l-5-5z" fill="#5b5b5b" />
      </Art>
      <Gear size={16} fill="#555" />
    </div>
  );
}

export default function App() {
  return (
    <div className="flex h-[852px] w-[1440px] flex-col overflow-hidden bg-[#2a2b2e] font-['Noto_Sans',sans-serif]">
      <Defs />
      <MenuBar />
      <div className="flex flex-1">
        <div className="flex w-[1438px] flex-col">
          <TitleBar />
          <TabBar />
          <div className="relative h-[725px] shrink-0 overflow-hidden bg-white">
            <Model />
            <div className="relative flex justify-between pt-1 pr-[13px] pl-1">
              <div className="flex flex-col">
                <Toolbar />
                <Browser />
              </div>
              <div className="mt-[9px]"><ViewCube /></div>
            </div>
            <Comments />
            <NavBar />
            <QuickSetup />
          </div>
          <Timeline />
        </div>
        <div className="flex w-[2px] flex-col">
          <div className="h-[22px] bg-[#c9c9cb]" />
          <div className="h-8 bg-[#04504f]" />
          <div className="h-8 bg-[#0f7576]" />
          <div className="h-[632px] bg-[#a3a3a3]" />
          <div className="h-[33px] bg-[#0f7576]" />
          <div className="h-[45px] bg-[#a8a8a8]" />
          <div className="flex-1 bg-[#0a5f60]" />
        </div>
      </div>
    </div>
  );
}
